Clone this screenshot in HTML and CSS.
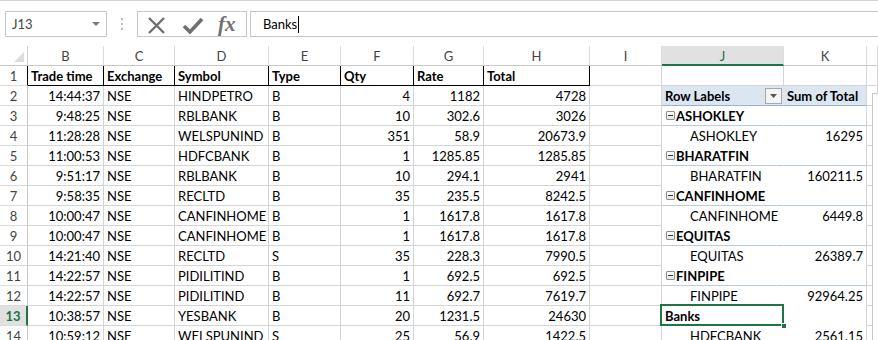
FILE: index.html
```html
<!DOCTYPE html>
<html>
<head>
<meta charset="utf-8">
<link rel="stylesheet" href="styles.css">
</head>
<body>
<div class="toolbar">
  <div class="namebox"><span>J13</span><svg class="dd" width="8" height="5" viewBox="0 0 8 5"><path d="M0 0h8L4 4z" fill="#7a7a7a"/></svg></div>
  <div class="dots"><i></i><i></i><i></i></div>
  <div class="btns">
    <svg class="ico" width="70" height="24" viewBox="0 0 70 24">
      <path d="M11 6 L26 21 M26 6 L11 21" stroke="#6f6f6f" stroke-width="2.4" fill="none"/>
      <path d="M46 14 L52 20 L64 7" stroke="#6f6f6f" stroke-width="3.6" fill="none"/>
    </svg>
    <span class="fx">fx</span>
  </div>
  <div class="formula"><span>Banks</span><i class="caret"></i></div>
</div>

<div class="sheet">
  <div class="row hdr">
    <div class="corner"><svg width="12" height="12" viewBox="0 0 12 12"><path d="M11 1V11H1z" fill="#dcdcdc"/></svg></div>
    <div class="ch">B</div><div class="ch">C</div><div class="ch">D</div><div class="ch">E</div><div class="ch">F</div><div class="ch">G</div><div class="ch">H</div><div class="ch">I</div><div class="ch selc">J</div><div class="ch">K</div><div class="ch"></div>
  </div>

  <div class="row">
    <div class="rh rh1">1</div>
    <div class="c th">Trade time</div><div class="c th">Exchange</div><div class="c th">Symbol</div><div class="c th">Type</div><div class="c th">Qty</div><div class="c th">Rate</div><div class="c th">Total</div>
    <div class="c"></div><div class="c"></div><div class="c"></div><div class="c"></div>
  </div>

  <div class="row">
    <div class="rh">2</div>
    <div class="c r">14:44:37</div><div class="c">NSE</div><div class="c">HINDPETRO</div><div class="c">B</div><div class="c r">4</div><div class="c r">1182</div><div class="c r">4728</div>
    <div class="c"></div><div class="c pj ph">Row Labels<span class="filt"><svg width="7" height="4" viewBox="0 0 7 4"><path d="M0 0h7L3.5 4z" fill="#555"/></svg></span></div><div class="c pk ph">Sum of Total</div><div class="c"></div>
  </div>

  <div class="row">
    <div class="rh">3</div>
    <div class="c r">9:48:25</div><div class="c">NSE</div><div class="c">RBLBANK</div><div class="c">B</div><div class="c r">10</div><div class="c r">302.6</div><div class="c r">3026</div>
    <div class="c"></div><div class="c pj pg"><b class="minus"></b>ASHOKLEY</div><div class="c pk pg"></div><div class="c"></div>
  </div>

  <div class="row">
    <div class="rh">4</div>
    <div class="c r">11:28:28</div><div class="c">NSE</div><div class="c">WELSPUNIND</div><div class="c">B</div><div class="c r">351</div><div class="c r">58.9</div><div class="c r">20673.9</div>
    <div class="c"></div><div class="c pj pi">ASHOKLEY</div><div class="c pk r">16295</div><div class="c"></div>
  </div>

  <div class="row">
    <div class="rh">5</div>
    <div class="c r">11:00:53</div><div class="c">NSE</div><div class="c">HDFCBANK</div><div class="c">B</div><div class="c r">1</div><div class="c r">1285.85</div><div class="c r">1285.85</div>
    <div class="c"></div><div class="c pj pg"><b class="minus"></b>BHARATFIN</div><div class="c pk pg"></div><div class="c"></div>
  </div>

  <div class="row">
    <div class="rh">6</div>
    <div class="c r">9:51:17</div><div class="c">NSE</div><div class="c">RBLBANK</div><div class="c">B</div><div class="c r">10</div><div class="c r">294.1</div><div class="c r">2941</div>
    <div class="c"></div><div class="c pj pi">BHARATFIN</div><div class="c pk r">160211.5</div><div class="c"></div>
  </div>

  <div class="row">
    <div class="rh">7</div>
    <div class="c r">9:58:35</div><div class="c">NSE</div><div class="c">RECLTD</div><div class="c">B</div><div class="c r">35</div><div class="c r">235.5</div><div class="c r">8242.5</div>
    <div class="c"></div><div class="c pj pg"><b class="minus"></b>CANFINHOME</div><div class="c pk pg"></div><div class="c"></div>
  </div>

  <div class="row">
    <div class="rh">8</div>
    <div class="c r">10:00:47</div><div class="c">NSE</div><div class="c">CANFINHOME</div><div class="c">B</div><div class="c r">1</div><div class="c r">1617.8</div><div class="c r">1617.8</div>
    <div class="c"></div><div class="c pj pi">CANFINHOME</div><div class="c pk r">6449.8</div><div class="c"></div>
  </div>

  <div class="row">
    <div class="rh">9</div>
    <div class="c r">10:00:47</div><div class="c">NSE</div><div class="c">CANFINHOME</div><div class="c">B</div><div class="c r">1</div><div class="c r">1617.8</div><div class="c r">1617.8</div>
    <div class="c"></div><div class="c pj pg"><b class="minus"></b>EQUITAS</div><div class="c pk pg"></div><div class="c"></div>
  </div>

  <div class="row">
    <div class="rh">10</div>
    <div class="c r">14:21:40</div><div class="c">NSE</div><div class="c">RECLTD</div><div class="c">S</div><div class="c r">35</div><div class="c r">228.3</div><div class="c r">7990.5</div>
    <div class="c"></div><div class="c pj pi">EQUITAS</div><div class="c pk r">26389.7</div><div class="c"></div>
  </div>

  <div class="row">
    <div class="rh">11</div>
    <div class="c r">14:22:57</div><div class="c">NSE</div><div class="c">PIDILITIND</div><div class="c">B</div><div class="c r">1</div><div class="c r">692.5</div><div class="c r">692.5</div>
    <div class="c"></div><div class="c pj pg"><b class="minus"></b>FINPIPE</div><div class="c pk pg"></div><div class="c"></div>
  </div>

  <div class="row">
    <div class="rh">12</div>
    <div class="c r">14:22:57</div><div class="c">NSE</div><div class="c">PIDILITIND</div><div class="c">B</div><div class="c r">11</div><div class="c r">692.7</div><div class="c r">7619.7</div>
    <div class="c"></div><div class="c pj pi">FINPIPE</div><div class="c pk r">92964.25</div><div class="c"></div>
  </div>

  <div class="row">
    <div class="rh selr">13</div>
    <div class="c r">10:38:57</div><div class="c">NSE</div><div class="c">YESBANK</div><div class="c">B</div><div class="c r">20</div><div class="c r">1231.5</div><div class="c r">24630</div>
    <div class="c"></div><div class="c pj bold sel">Banks<span class="handle"></span></div><div class="c pk"></div><div class="c"></div>
  </div>

  <div class="row">
    <div class="rh">14</div>
    <div class="c r">10:59:12</div><div class="c">NSE</div><div class="c">WELSPUNIND</div><div class="c">S</div><div class="c r">25</div><div class="c r">56.9</div><div class="c r">1422.5</div>
    <div class="c"></div><div class="c pj pi">HDFCBANK</div><div class="c pk r">2561.15</div><div class="c"></div>
  </div>

  <div class="panel"></div>
</div>
</body>
</html>
```

FILE: styles.css
```css
* { box-sizing: border-box; }
html, body { margin: 0; padding: 0; }
body {
  width: 878px;
  height: 340px;
  overflow: hidden;
  background: #fff;
  color: #000;
  font-family: Lato, "Liberation Sans", sans-serif;
  font-size: 13px;
}

/* formula bar */
.toolbar {
  height: 46px;
  border-top: 1px solid #d4d4d4;
  padding-top: 10px;
  display: flex;
  align-items: flex-start;
}
.namebox {
  margin-left: 5px;
  width: 102px;
  height: 26px;
  border: 1px solid #c6c6c6;
  display: flex;
  align-items: center;
  justify-content: space-between;
  padding: 0 6px 0 6px;
  color: #444;
  font-size: 13px;
}
.dots {
  width: 30px;
  height: 26px;
  display: flex;
  flex-direction: column;
  align-items: center;
  justify-content: center;
  gap: 3px;
}
.dots i {
  display: block;
  width: 2px;
  height: 2px;
  background: #b8b8b8;
}
.btns {
  width: 110px;
  height: 26px;
  border: 1px solid #c6c6c6;
  display: flex;
  align-items: center;
}
.ico { display: block; margin-top: -1px; }
.fx {
  font-family: "Liberation Serif", serif;
  font-style: italic;
  font-weight: bold;
  font-size: 21px;
  color: #707070;
  margin-left: 10px;
  line-height: 24px;
}
.formula {
  flex: 1;
  height: 26px;
  margin-left: 3px;
  border: 1px solid #c6c6c6;
  border-right: none;
  display: flex;
  align-items: center;
  padding-left: 12px;
  font-size: 13px;
}
.caret {
  display: block;
  width: 1px;
  height: 17px;
  background: #000;
  margin-left: 1px;
}

/* sheet */
.sheet { position: relative; width: 878px; overflow: hidden; }
.row {
  display: grid;
  grid-template-columns: 28px 76px 71px 94px 72px 73px 70px 106px 72px 122px 83px minmax(0, 1fr);
  height: 20px;
}
.c, .rh, .ch, .corner {
  height: 20px;
  border-right: 1px solid #d4d4d4;
  border-bottom: 1px solid #d4d4d4;
  white-space: nowrap;
  overflow: hidden;
  line-height: 20px;
  padding: 0 3px;
}
.c { position: relative; }
.r { text-align: right; }
.hdr .ch {
  text-align: center;
  color: #444;
  border-right-color: #dcdcdc;
  border-bottom-color: #c8c8c8;
}
.corner {
  border-bottom-color: #c8c8c8;
  display: flex;
  align-items: flex-end;
  justify-content: flex-end;
  padding: 0 2px 2px 0;
}
.corner svg { display: block; }
.selc {
  background: #e1e1e1;
  color: #217346 !important;
  border-bottom: 2px solid #217346 !important;
}
.rh {
  text-align: center;
  color: #444;
  padding: 0;
  border-right-color: #c8c8c8;
  border-bottom-color: #dcdcdc;
}
.rh1 { border-right-color: #000; }
.selr {
  background: #e1e1e1;
  color: #217346;
  font-weight: bold;
  border-right: 2px solid #217346;
}
.th {
  font-weight: bold;
  border-right-color: #000;
  border-bottom-color: #000;
}

/* pivot */
.pj { border-right-color: #fff; border-bottom-color: #fff; padding-left: 3px; }
.pk { border-bottom-color: #fff; }
.ph {
  background: #dce6f1;
  font-weight: bold;
  border-bottom-color: #95b3d7;
}
.pj.ph { border-right-color: #dce6f1; }
.filt {
  position: absolute;
  right: 1px;
  top: 2px;
  width: 17px;
  height: 16px;
  border: 1px solid #a9a9a9;
  background: #f4f4f4;
  display: flex;
  align-items: center;
  justify-content: center;
}
.filt svg { display: block; }
.pg {
  font-weight: bold;
  border-bottom-color: #b8cce4;
}
.pj.pg { display: flex; align-items: center; padding-left: 4px; }
.minus {
  display: block;
  width: 9px;
  height: 9px;
  border: 1px solid #8e8e8e;
  border-radius: 1px;
  background: linear-gradient(#fdfdfd, #e4e4e4);
  position: relative;
  margin-right: 1px;
}
.minus::after {
  content: "";
  position: absolute;
  left: 1px;
  right: 1px;
  top: 3px;
  height: 1px;
  background: #333;
}
.pi { padding-left: 28px; }
.bold { font-weight: bold; }
.sel { overflow: visible; z-index: 2; }
.sel::after {
  content: "";
  position: absolute;
  left: -2px;
  top: -2px;
  right: -1px;
  bottom: -1px;
  border: 2px solid #217346;
}
.handle {
  position: absolute;
  right: -4px;
  bottom: -4px;
  width: 6px;
  height: 6px;
  background: #217346;
  border: 1px solid #fff;
  z-index: 3;
}
.panel {
  position: absolute;
  left: 872px;
  top: 47px;
  width: 6px;
  height: 260px;
  border-left: 1px solid #c8c8c8;
  border-top: 1px solid #c8c8c8;
  background: #fff;
}
```
